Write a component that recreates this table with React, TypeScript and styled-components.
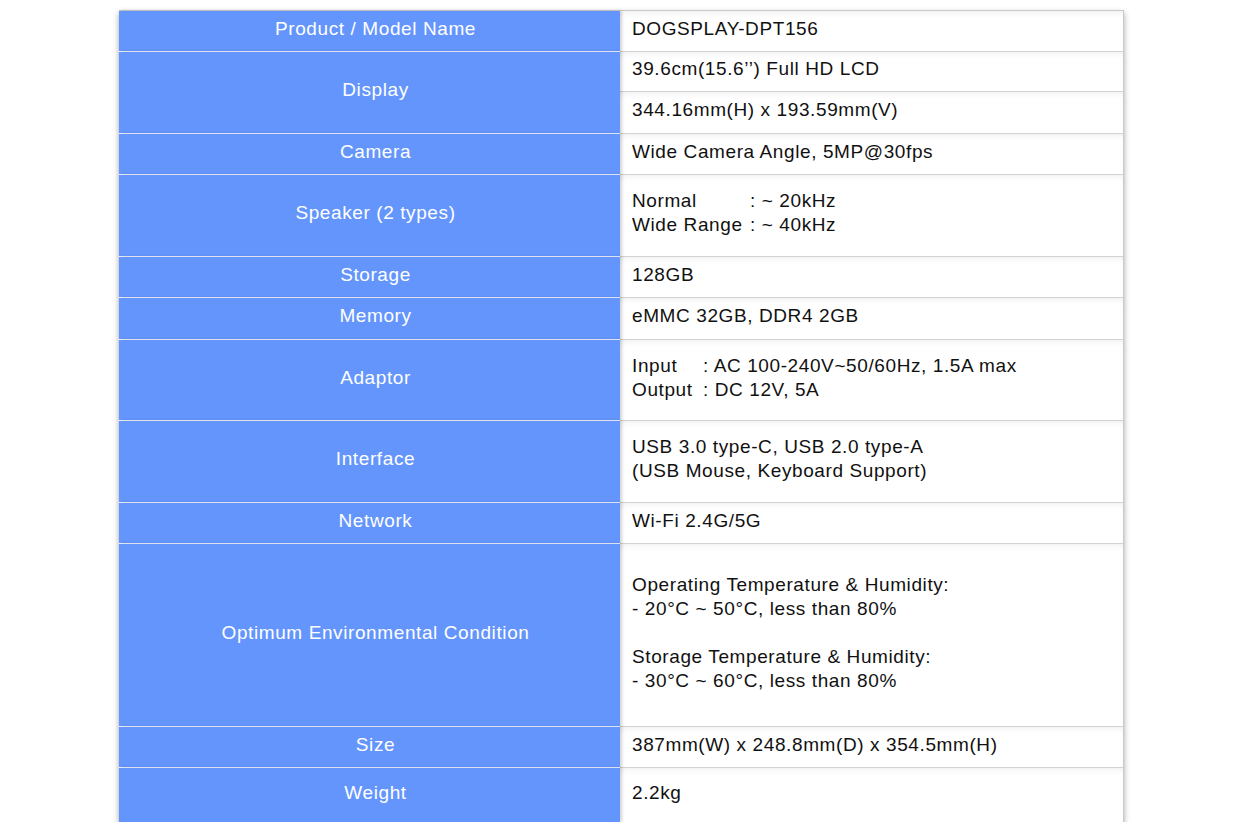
import styled, { createGlobalStyle } from "styled-components";

const GlobalStyle = createGlobalStyle`
  html, body {
    margin: 0;
    padding: 0;
    background: #ffffff;
  }
  body {
    font-family: "Liberation Sans", Arial, sans-serif;
  }
`;

const Page = styled.div`
  padding: 10px 0 0 119px;
`;

const Table = styled.div`
  width: 1004px;
  display: flex;
  flex-direction: column;
  border-top: 1px solid #c9c9c9;
  border-right: 1px solid #c9c9c9;
  box-shadow: 0 3px 6px rgba(0, 0, 0, 0.35);
  letter-spacing: 0.6px;
`;

const Row = styled.div<{ $last?: boolean }>`
  display: flex;
  border-bottom: ${({ $last }) => ($last ? "none" : "1px solid #d3d3d3")};
`;

const Label = styled.div<{ $last?: boolean }>`
  flex: 0 0 501px;
  display: flex;
  align-items: center;
  justify-content: center;
  padding: 0 0 5px 12px;
  box-sizing: border-box;
  background: #6495fc;
  color: #ffffff;
  font-size: 19px;
  position: relative;
  z-index: 1;
  box-shadow: 2px 0 3px rgba(0, 0, 0, 0.18);
  margin-bottom: ${({ $last }) => ($last ? "0" : "-1px")};
  border-bottom: ${({ $last }) => ($last ? "none" : "1px solid #eef3ff")};
`;

const Values = styled.div`
  flex: 1;
  display: flex;
  flex-direction: column;
`;

const Value = styled.div<{ $h: number; $divider?: boolean }>`
  height: ${({ $h }) => $h}px;
  box-sizing: border-box;
  display: flex;
  flex-direction: column;
  justify-content: center;
  padding: 0 0 5px 12px;
  color: #111111;
  font-size: 19px;
  line-height: 24px;
  box-shadow: inset 0 7px 7px -6px rgba(0, 0, 0, 0.08);
  border-bottom: ${({ $divider }) => ($divider ? "1px solid #d3d3d3" : "none")};
`;

const Line = styled.div``;

const Gap = styled.div`
  height: 24px;
`;

const Key = styled.span<{ $w: number }>`
  display: inline-block;
  width: ${({ $w }) => $w}px;
`;

export default function App() {
  return (
    <Page>
      <GlobalStyle />
      <Table>
        <Row>
          <Label>Product / Model Name</Label>
          <Values>
            <Value $h={40}>DOGSPLAY-DPT156</Value>
          </Values>
        </Row>
        <Row>
          <Label>Display</Label>
          <Values>
            <Value $h={40} $divider>
              39.6cm(15.6’’) Full HD LCD
            </Value>
            <Value $h={41}>344.16mm(H) x 193.59mm(V)</Value>
          </Values>
        </Row>
        <Row>
          <Label>Camera</Label>
          <Values>
            <Value $h={40}>Wide Camera Angle, 5MP@30fps</Value>
          </Values>
        </Row>
        <Row>
          <Label>Speaker (2 types)</Label>
          <Values>
            <Value $h={81}>
              <Line>
                <Key $w={118}>Normal</Key>: ~ 20kHz
              </Line>
              <Line>
                <Key $w={118}>Wide Range</Key>: ~ 40kHz
              </Line>
            </Value>
          </Values>
        </Row>
        <Row>
          <Label>Storage</Label>
          <Values>
            <Value $h={40}>128GB</Value>
          </Values>
        </Row>
        <Row>
          <Label>Memory</Label>
          <Values>
            <Value $h={41}>eMMC 32GB, DDR4 2GB</Value>
          </Values>
        </Row>
        <Row>
          <Label>Adaptor</Label>
          <Values>
            <Value $h={80}>
              <Line>
                <Key $w={71}>Input</Key>: AC 100-240V~50/60Hz, 1.5A max
              </Line>
              <Line>
                <Key $w={71}>Output</Key>: DC 12V, 5A
              </Line>
            </Value>
          </Values>
        </Row>
        <Row>
          <Label>Interface</Label>
          <Values>
            <Value $h={81}>
              <Line>USB 3.0 type-C, USB 2.0 type-A</Line>
              <Line>(USB Mouse, Keyboard Support)</Line>
            </Value>
          </Values>
        </Row>
        <Row>
          <Label>Network</Label>
          <Values>
            <Value $h={40}>Wi-Fi 2.4G/5G</Value>
          </Values>
        </Row>
        <Row>
          <Label>Optimum Environmental Condition</Label>
          <Values>
            <Value $h={182}>
              <Line>Operating Temperature &amp; Humidity:</Line>
              <Line>- 20°C ~ 50°C, less than 80%</Line>
              <Gap />
              <Line>Storage Temperature &amp; Humidity:</Line>
              <Line>- 30°C ~ 60°C, less than 80%</Line>
            </Value>
          </Values>
        </Row>
        <Row>
          <Label>Size</Label>
          <Values>
            <Value $h={40}>387mm(W) x 248.8mm(D) x 354.5mm(H)</Value>
          </Values>
        </Row>
        <Row $last>
          <Label $last>Weight</Label>
          <Values>
            <Value $h={54}>2.2kg</Value>
          </Values>
        </Row>
      </Table>
    </Page>
  );
}
